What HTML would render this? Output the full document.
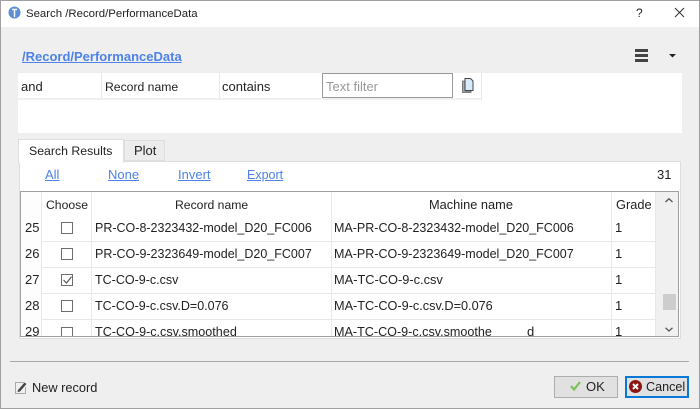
<!DOCTYPE html>
<html><head><meta charset="utf-8"><style>
html,body{margin:0;padding:0;background:#efefef}
#w{position:relative;width:700px;height:409px;overflow:hidden;background:#efefef;font-family:"Liberation Sans",sans-serif;font-size:12px;color:#222;filter:blur(.3px)}
#w div,#w span.t{position:absolute;white-space:nowrap}
.t{font-family:"Liberation Sans",sans-serif;font-size:13px;line-height:16px;color:#222}
.r{font-size:12.5px}
.l{color:#4d82e8;text-decoration:underline}
.hl{background:#e8e8e8}
.v{background:#e8e8e8;width:1px}
.cb{width:10px;height:10px;border:1px solid #6e6e6e;background:#fff}
svg{position:absolute;overflow:visible}
</style></head><body><div id="w">
<div style="left:0;top:0;width:700px;height:27px;background:#fff"></div>
<svg style="left:8px;top:6px" width="13" height="13" viewBox="0 0 13 13"><circle cx="6.500" cy="6.500" r="6" fill="#5a8fd6"/><path d="M4 3.500H9M6.500 3.500V11" stroke="#fff" stroke-width="1.400" fill="none"/></svg>
<span class="t" style="left:26px;top:6px;font-size:11.4px">Search /Record/PerformanceData</span>
<span class="t" style="left:636px;top:5px;font-size:12px">?</span>
<svg style="left:675px;top:8px" width="10" height="10"><path d="M0 0L9 9M9 0L0 9" stroke="#333" stroke-width="1" fill="none"/></svg>

<span class="t l" style="left:22px;top:49px;font-weight:bold;font-size:13px">/Record/PerformanceData</span>
<svg style="left:635px;top:49px" width="14" height="13"><path d="M0 0H13V3H0ZM0 5H13V8H0ZM0 10H13V13H0Z" fill="#444"/></svg>
<svg style="left:669px;top:54px" width="8" height="4"><path d="M0 0H7L3.500 3.500Z" fill="#222"/></svg>

<div style="left:18px;top:73px;width:664px;height:60px;background:#fff"></div>
<div style="left:18px;top:98px;width:464px;height:2px;background:#f0f0f0"></div>
<div class="v" style="left:101px;top:73px;height:26px"></div>
<div class="v" style="left:219px;top:73px;height:26px"></div>
<div class="v" style="left:481px;top:73px;height:26px"></div>
<span class="t" style="left:21px;top:79px">and</span>
<span class="t" style="left:105px;top:79px;font-size:12.2px">Record name</span>
<span class="t" style="left:222px;top:79px">contains</span>
<div style="left:322px;top:73px;width:129px;height:23px;border:1px solid #9a9a9a;background:#fff"></div>
<span class="t" style="left:326px;top:79px;color:#999">Text filter</span>
<svg style="left:462px;top:78px" width="12" height="15" viewBox="0 0 12 15"><path d="M0.500 3H3V13H9V14.500H0.500Z" fill="#9aa7b3" stroke="#666" stroke-width=".8"/><path d="M3 0.500H8.500L11 3V12.500H3Z" fill="#d8ebfb" stroke="#444" stroke-width="1"/></svg>

<div style="left:19px;top:161px;width:660px;height:176px;background:#fff;border:1px solid #dedede"></div>
<div style="left:124px;top:140px;width:41px;height:21px;background:#ececec;border:1px solid #dedede;box-sizing:border-box"></div>
<div style="left:18px;top:139px;width:106px;height:24px;background:#fff;border:1px solid #dedede;border-bottom:0;box-sizing:border-box"></div>
<span class="t" style="left:29px;top:143px;font-size:12.300px">Search Results</span>
<span class="t" style="left:134px;top:143px">Plot</span>
<span class="t l" style="left:45px;top:167px">All</span>
<span class="t l" style="left:108px;top:167px">None</span>
<span class="t l" style="left:178px;top:167px">Invert</span>
<span class="t l" style="left:247px;top:167px;font-size:12.500px">Export</span>
<span class="t" style="left:657px;top:167px">31</span>

<div style="left:20px;top:191px;width:657px;height:144px;border:1px solid #a0a0a0;background:#fff;overflow:hidden">
 <div style="left:0;top:0;width:21px;height:144px;background:#fdfdfd"></div>
 <div class="v" style="left:20px;top:0;height:144px"></div>
 <div class="v" style="left:70px;top:0;height:144px"></div>
 <div class="v" style="left:310px;top:0;height:144px"></div>
 <div class="v" style="left:590px;top:0;height:144px"></div>
 <div class="v" style="left:634px;top:0;height:144px"></div>
 <div class="hl" style="left:21px;top:49px;width:613px;height:1px"></div>
 <div class="hl" style="left:21px;top:75px;width:613px;height:1px"></div>
 <div class="hl" style="left:21px;top:101px;width:613px;height:1px"></div>
 <div class="hl" style="left:21px;top:127px;width:613px;height:1px"></div>
 <div style="left:635px;top:0;width:22px;height:144px;background:#f0f0f0"></div>
 <div style="left:642px;top:102px;width:13px;height:16px;background:#cdcdcd"></div>
 <svg style="left:644px;top:6px" width="8" height="5"><path d="M0.500 4L4 0.800L7.500 4" stroke="#555" stroke-width="1.300" fill="none"/></svg>
 <svg style="left:644px;top:135px" width="8" height="5"><path d="M0.500 0.800L4 4L7.500 0.800" stroke="#555" stroke-width="1.300" fill="none"/></svg>

 <span class="t" style="left:25px;top:5px;font-size:12.200px">Choose</span>
 <span class="t" style="left:154px;top:5px;font-size:12.200px">Record name</span>
 <span class="t" style="left:408px;top:5px;font-size:12.800px">Machine name</span>
 <span class="t" style="left:595px;top:5px;font-size:12.800px">Grade</span>

 <span class="t" style="left:4px;top:28px">25</span><div class="cb" style="left:40px;top:30px"></div>
 <span class="t r" style="left:74px;top:28px">PR-CO-8-2323432-model_D20_FC006</span>
 <span class="t r" style="left:313px;top:28px">MA-PR-CO-8-2323432-model_D20_FC006</span>
 <span class="t" style="left:594px;top:28px">1</span>

 <span class="t" style="left:4px;top:54px">26</span><div class="cb" style="left:40px;top:56px"></div>
 <span class="t r" style="left:74px;top:54px">PR-CO-9-2323649-model_D20_FC007</span>
 <span class="t r" style="left:313px;top:54px">MA-PR-CO-9-2323649-model_D20_FC007</span>
 <span class="t" style="left:594px;top:54px">1</span>

 <span class="t" style="left:4px;top:80px">27</span><div class="cb" style="left:40px;top:82px"></div>
 <svg style="left:42px;top:84px" width="9" height="8"><path d="M0.500 4L3.500 7L8.500 0.800" stroke="#555" stroke-width="1.200" fill="none"/></svg>
 <span class="t r" style="left:74px;top:80px">TC-CO-9-c.csv</span>
 <span class="t" style="left:313px;top:80px;font-size:12.800px">MA-TC-CO-9-c.csv</span>
 <span class="t" style="left:594px;top:80px">1</span>

 <span class="t" style="left:4px;top:106px">28</span><div class="cb" style="left:40px;top:108px"></div>
 <span class="t r" style="left:74px;top:106px">TC-CO-9-c.csv.D=0.076</span>
 <span class="t" style="left:313px;top:106px;font-size:12.700px">MA-TC-CO-9-c.csv.D=0.076</span>
 <span class="t" style="left:594px;top:106px">1</span>

 <span class="t" style="left:4px;top:132px">29</span><div class="cb" style="left:40px;top:135px"></div>
 <span class="t" style="left:74px;top:132px;font-size:12.600px">TC-CO-9-c.csv.smoothed</span>
 <span class="t" style="left:313px;top:132px;font-size:12.600px">MA-TC-CO-9-c.csv.smoothe</span>
 <span class="t" style="left:506px;top:132px">d</span>
 <span class="t" style="left:594px;top:132px">1</span>
</div>

<div style="left:10px;top:361px;width:679px;height:1px;background:#a8a8a8"></div>
<svg style="left:15px;top:381px" width="12" height="13" viewBox="0 0 12 13"><path d="M9 1.500H0.500V12.500H10.500V6" fill="none" stroke="#aaa" stroke-width="1"/><path d="M3 9L9.500 1.500L11.500 3L5 10.500L2.500 11Z" fill="#444"/></svg>
<span class="t" style="left:32px;top:380px;font-size:12.800px">New record</span>

<div style="left:554px;top:376px;width:62px;height:20px;background:#e1e1e1;border:1px solid #adadad"></div>
<svg style="left:570px;top:381px" width="11" height="10"><path d="M1 5L4 8.500L10 1" stroke="#7ebf58" stroke-width="2.200" fill="none"/></svg>
<span class="t" style="left:586px;top:379px">OK</span>
<div style="left:625px;top:376px;width:60px;height:18px;background:#e1e1e1;border:2px solid #0a78d7"></div>
<svg style="left:629px;top:380px" width="13" height="13"><circle cx="6.500" cy="6.500" r="6.500" fill="#8a1612"/><path d="M4 4L9 9M9 4L4 9" stroke="#fff" stroke-width="2" fill="none"/></svg>
<span class="t" style="left:646px;top:379px;font-size:12.600px">Cancel</span>

<div style="left:0;top:0;width:700px;height:1px;background:#a0a0a0"></div>
<div style="left:0;top:408px;width:700px;height:1px;background:#a0a0a0"></div>
<div style="left:0;top:0;width:1px;height:409px;background:#a0a0a0"></div>
<div style="left:699px;top:0;width:1px;height:409px;background:#a0a0a0"></div>
</div></body></html>
